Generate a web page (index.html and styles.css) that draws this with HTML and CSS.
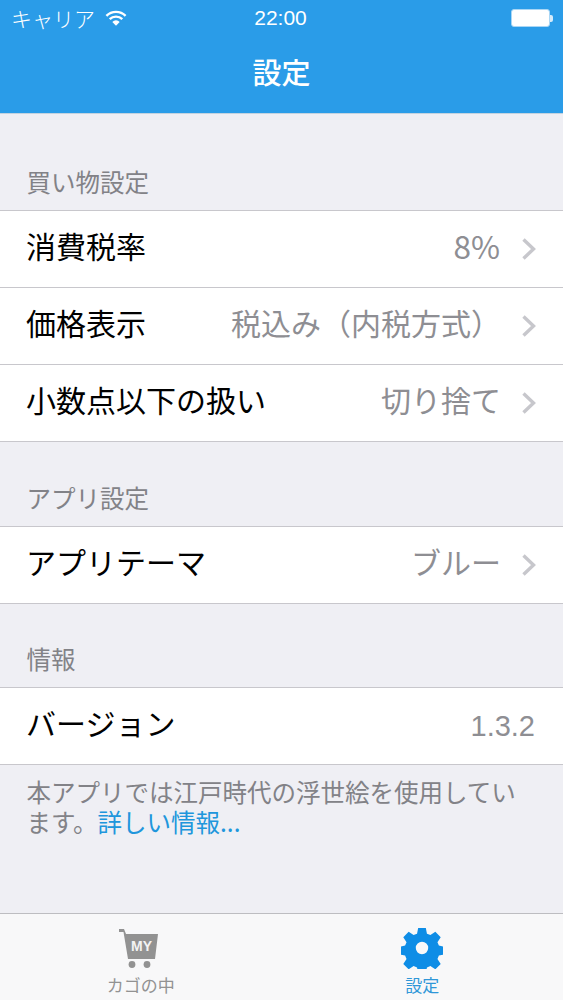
FILE: index.html
```html
<!DOCTYPE html>
<html lang="ja">
<head>
<meta charset="utf-8">
<title>設定</title>
<link rel="stylesheet" href="styles.css">
</head>
<body>
<div class="screen">
  <header class="header">
    <div class="status">
      <div class="status-left">
        <span class="carrier">キャリア</span>
        <svg class="wifi" viewBox="0 0 22 16" width="22" height="16"><path d="M11 15.8 7.3 11.9a5.2 5.2 0 0 1 7.4 0Z" fill="#fff"/><path d="M4.7 9.2a9 9 0 0 1 12.6 0M1.4 5.8a13.6 13.6 0 0 1 19.2 0" fill="none" stroke="#fff" stroke-width="2.4"/></svg>
      </div>
      <span class="time">22:00</span>
      <div class="battery"><span class="battery-body"></span><span class="battery-tip"></span></div>
    </div>
    <h1 class="title">設定</h1>
  </header>
  <main class="content">
    <h2 class="section-label first">買い物設定</h2>
    <ul class="group">
      <li class="row"><span class="row-name">消費税率</span><span class="row-value num">8%</span><svg class="chev" viewBox="0 0 16 24" width="16" height="24"><path d="M2.5 2.5 12.5 12 2.5 21.5" fill="none" stroke="#c7c7cc" stroke-width="3.4"/></svg></li>
      <li class="row"><span class="row-name">価格表示</span><span class="row-value">税込み（内税方式）</span><svg class="chev" viewBox="0 0 16 24" width="16" height="24"><path d="M2.5 2.5 12.5 12 2.5 21.5" fill="none" stroke="#c7c7cc" stroke-width="3.4"/></svg></li>
      <li class="row"><span class="row-name">小数点以下の扱い</span><span class="row-value">切り捨て</span><svg class="chev" viewBox="0 0 16 24" width="16" height="24"><path d="M2.5 2.5 12.5 12 2.5 21.5" fill="none" stroke="#c7c7cc" stroke-width="3.4"/></svg></li>
    </ul>
    <h2 class="section-label">アプリ設定</h2>
    <ul class="group">
      <li class="row"><span class="row-name">アプリテーマ</span><span class="row-value">ブルー</span><svg class="chev" viewBox="0 0 16 24" width="16" height="24"><path d="M2.5 2.5 12.5 12 2.5 21.5" fill="none" stroke="#c7c7cc" stroke-width="3.4"/></svg></li>
    </ul>
    <h2 class="section-label last">情報</h2>
    <ul class="group">
      <li class="row"><span class="row-name">バージョン</span><span class="row-value plain">1.3.2</span></li>
    </ul>
    <p class="note">本アプリでは江戸時代の浮世絵を使用しています。<a class="link" href="#">詳しい情報...</a></p>
  </main>
  <nav class="tabbar">
    <div class="tab">
      <svg class="tab-icon" viewBox="4 0 44 44" width="44" height="44">
        <path d="M2 3h7l2 5h32l-3 25H13L8.5 6H2Z" fill="#929292"/>
        <circle cx="17" cy="38.5" r="3.4" fill="#929292"/><circle cx="32" cy="38.5" r="3.4" fill="#929292"/>
        <text x="26.5" y="25" text-anchor="middle" class="my">MY</text>
      </svg>
      <span class="tab-label">カゴの中</span>
    </div>
    <div class="tab active">
      <svg class="tab-icon gear" viewBox="0 0 44 44" width="42" height="42">
        <path fill-rule="evenodd" fill="#0e8de6" d="M18 1h8l1.2 6 3.6 1.5 5.2-3.4 5.6 5.6-3.4 5.2 1.5 3.6 6 1.2v8l-6 1.2-1.5 3.6 3.4 5.2-5.6 5.6-5.2-3.4-3.6 1.5-1.2 6h-8l-1.2-6-3.6-1.5-5.2 3.4-5.6-5.6 3.4-5.2-1.5-3.6-6-1.2v-8l6-1.2 1.5-3.6-3.4-5.2 5.6-5.6 5.2 3.4 3.6-1.5ZM22 15.5a6.5 6.5 0 1 0 0 13 6.5 6.5 0 0 0 0-13Z"/>
      </svg>
      <span class="tab-label">設定</span>
    </div>
  </nav>
</div>
</body>
</html>
```
FILE: styles.css
```css
* { box-sizing: border-box; margin: 0; padding: 0; }
html, body { width: 563px; height: 1000px; overflow: hidden; }
body { font-family: "Noto Sans CJK JP", "Liberation Sans", sans-serif; background: #efeff4; }
.screen { width: 563px; height: 1000px; display: flex; flex-direction: column; background: #efeff4; }

.header { height: 114px; flex: none; background: #2a9ce8; border-bottom: 1px solid #c3d3e0; color: #fff; display: flex; flex-direction: column; }
.status { height: 38px; display: flex; align-items: center; justify-content: space-between; padding: 0 10px 2px 11px; position: relative; }
.status-left { display: flex; align-items: center; gap: 10px; }
.carrier { font-size: 21px; font-weight: 300; line-height: 30px; }
.wifi { display: block; }
.time { position: absolute; left: 0; right: 2px; text-align: center; font-family: "Liberation Sans", sans-serif; font-size: 21px; line-height: 30px; }
.battery { display: flex; align-items: center; }
.battery-body { width: 39px; height: 18px; background: #fff; border: 1px solid #a9d6f5; border-radius: 3px; }
.battery-tip { width: 3px; height: 7px; background: #d5ebfa; border-radius: 0 2px 2px 0; }
.title { font-size: 29px; font-weight: 500; line-height: 42px; text-align: center; margin-top: 12px; }

.content { flex: 1; display: flex; flex-direction: column; }
.section-label { font-size: 24.5px; font-weight: 400; line-height: 34px; height: 34px; color: #828287; padding-left: 26.5px; margin: 39px 0 11px; }
.section-label.first { margin-top: 51px; }
.section-label.last { margin-top: 38px; }
.group { list-style: none; background: #fff; border-top: 1px solid #c8c7cc; border-bottom: 1px solid #c8c7cc; }
.row { height: 77px; display: flex; align-items: center; padding: 0 26px 9px 26px; border-bottom: 1px solid #c8c7cc; }
.row:last-child { border-bottom: 0; height: 76px; }
.row-name { font-size: 30px; color: #000; line-height: 42px; flex: none; }
.row-value { margin-left: auto; font-size: 30px; line-height: 42px; color: #8e8e93; }
.row-value.num { font-size: 31.5px; margin-right: 1px; }
.row-value.plain { font-family: "Liberation Sans", sans-serif; font-size: 29px; margin-right: 2px; position: relative; top: 4px; }
.chev { margin-left: 20px; margin-top: 9px; flex: none; display: block; }
.note { font-size: 24.5px; line-height: 30px; color: #828287; padding: 12px 26.5px 0; }
.link { color: #2096dc; text-decoration: none; }

.tabbar { height: 87px; flex: none; background: #f8f8f9; border-top: 1px solid #bdbdc1; display: flex; }
.tab { flex: 1; display: flex; flex-direction: column; align-items: center; padding-top: 12px; color: #929292; }
.tab-icon { display: block; }
.tab-icon.gear { margin: 1px 0; }
.tab-label { font-size: 17px; line-height: 24px; margin-top: 3px; }
.tab.active { color: #2f97d8; }
.my { font-family: "Liberation Sans", sans-serif; font-size: 14px; font-weight: 700; fill: #f3f3f3; }
```
